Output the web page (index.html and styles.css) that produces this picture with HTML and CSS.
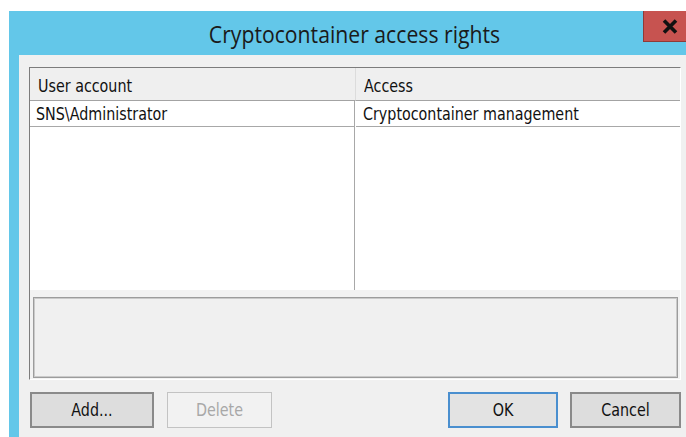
FILE: index.html
```html
<!DOCTYPE html>
<html lang="en">
<head>
<meta charset="utf-8">
<title>Cryptocontainer access rights</title>
<link rel="stylesheet" href="styles.css">
</head>
<body>
  <div class="window">
    <div class="titlebar">
      <span class="title"><span class="tx">Cryptocontainer access rights</span></span>
      <button class="close" aria-label="Close">
        <svg width="16" height="15" viewBox="0 0 16 15">
          <path d="M2 1.5 L14 13.5 M14 1.5 L2 13.5" stroke="#111" stroke-width="3.6" stroke-linecap="butt"/>
        </svg>
      </button>
    </div>
    <div class="client">
      <div class="frame">
        <div class="list">
          <div class="cell head first"><span class="tx">User account</span></div>
          <div class="cell head"><span class="tx">Access</span></div>
          <div class="cell row first"><span class="tx">SNS\Administrator</span></div>
          <div class="cell row"><span class="tx">Cryptocontainer management</span></div>
          <div class="cell filler first"></div>
          <div class="cell filler"></div>
        </div>
        <div class="description"></div>
      </div>
      <div class="buttons">
        <button class="btn add"><span class="tx">Add...</span></button>
        <button class="btn delete" disabled><span class="tx">Delete</span></button>
        <button class="btn ok"><span class="tx">OK</span></button>
        <button class="btn cancel"><span class="tx">Cancel</span></button>
      </div>
    </div>
  </div>
</body>
</html>
```
FILE: styles.css
```css
html, body {
  margin: 0;
  height: 437px;
  overflow: hidden;
}

body {
  background: #ffffff;
  padding: 11px 0 0 9px;
  box-sizing: border-box;
  font-family: "DejaVu Sans", "Liberation Sans", sans-serif;
  color: #111;
}

/* the dialog's text is drawn a little taller than the stock face */
.tx {
  display: inline-block;
  transform: scaleY(1.2);
}

.window {
  width: 677px;
  height: 426px;
  background: #63c7e9;
  display: flex;
  flex-direction: column;
}

.titlebar {
  flex: none;
  height: 44px;
  position: relative;
  display: flex;
  align-items: center;
  justify-content: center;
}

.title {
  font-family: "Open Sans", "Noto Sans", sans-serif;
  font-size: 21.2px;
  color: #1a1a1a;
  padding-left: 14px;
  padding-top: 1px;
}

.title .tx {
  transform: scaleY(1.1);
}

.close {
  position: absolute;
  top: 0;
  right: 0;
  width: 43px;
  height: 31px;
  margin: 0;
  padding: 0 0 0 10px;
  border: none;
  border-left: 1px solid #8f3b38;
  border-bottom: 1px solid #8f3b38;
  background: #c75350;
  display: flex;
  align-items: center;
  justify-content: center;
}

.client {
  flex: 1;
  margin-left: 10px;
  background: #f0f0f0;
  padding: 12px 0 0 10px;
  display: flex;
  flex-direction: column;
}

.frame {
  width: 652px;
  height: 313px;
  box-sizing: border-box;
  border-top: 1px solid #7c7c7c;
  border-left: 1px solid #7c7c7c;
  border-right: 1px solid #ffffff;
  border-bottom: 1px solid #ffffff;
  background: #f2f2f2;
  display: flex;
  flex-direction: column;
}

.list {
  height: 222px;
  background: #ffffff;
  display: grid;
  grid-template-columns: 326px 1fr;
  grid-template-rows: 33px 26px 1fr;
  font-size: 14.3px;
}

.cell {
  display: flex;
  align-items: center;
  padding-left: 7px;
  white-space: nowrap;
}

.head {
  background: #efefef;
  border-bottom: 1px solid #a3a3a3;
  padding-left: 8px;
  padding-top: 4px;
}

.head.first {
  border-right: 1px solid #dcdcdc;
}

.row {
  border-bottom: 1px solid #a8a8a8;
  padding-top: 1px;
}

.row.first {
  padding-left: 6px;
}

.first.row,
.first.filler {
  border-right: 1px solid #a8a8a8;
  margin-right: 1px;
}

.description {
  margin: 7px 2px 1px 3px;
  flex: 1;
  background: #f0f0f0;
  border: 1px solid #9c9c9c;
  box-shadow: inset 0 0 0 1px #cacaca;
}

.buttons {
  display: flex;
  margin-top: 12px;
  padding-left: 1px;
}

.btn {
  height: 36px;
  box-sizing: border-box;
  margin: 0;
  padding: 0;
  font-family: "DejaVu Sans", "Liberation Sans", sans-serif;
  font-size: 14.3px;
  color: #111;
  background: #dddddd;
  border: 2px solid #8a8a8a;
}

.add {
  width: 124px;
}

.delete {
  width: 105px;
  margin-left: 13px;
  background: #f2f2f2;
  border: 1px solid #c3c3c3;
  color: #a8a8a8;
}

.ok {
  width: 110px;
  margin-left: auto;
  background: #e3e3e3;
  border: 2px solid #4a8fcf;
}

.cancel {
  width: 111px;
  margin-left: 12px;
  margin-right: 5px;
}
```
